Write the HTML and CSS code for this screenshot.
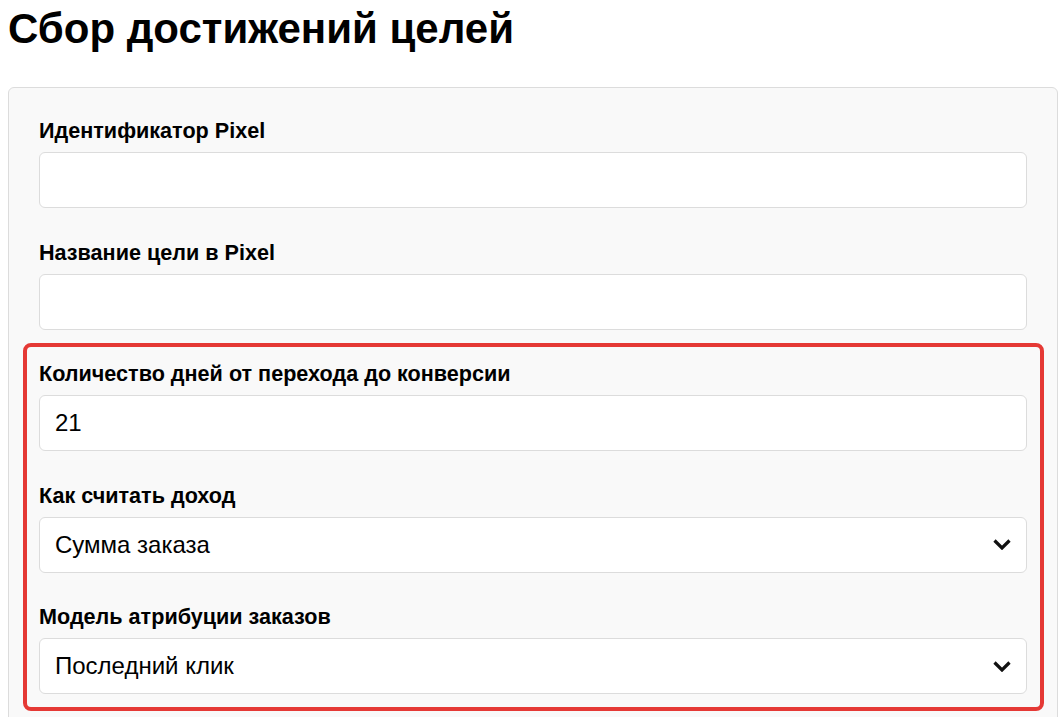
FILE: index.html
```html
<!DOCTYPE html>
<html lang="ru">
<head>
<meta charset="utf-8">
<title>Сбор достижений целей</title>
<link rel="stylesheet" href="styles.css">
</head>
<body>
<h1 class="title">Сбор достижений целей</h1>
<div class="card">
  <div class="field">
    <label class="label">Идентификатор Pixel</label>
    <input class="input" type="text" value="">
  </div>
  <div class="field">
    <label class="label">Название цели в Pixel</label>
    <input class="input" type="text" value="">
  </div>
  <div class="highlight">
    <div class="field">
      <label class="label">Количество дней от перехода до конверсии</label>
      <input class="input" type="text" value="21">
    </div>
    <div class="field">
      <label class="label">Как считать доход</label>
      <div class="select">
        <span class="select-value">Сумма заказа</span>
        <svg class="chevron" width="18" height="11" viewBox="0 0 18 11"><path d="M1.5 1.5 L9 9 L16.5 1.5" fill="none" stroke="#111" stroke-width="3.2"/></svg>
      </div>
    </div>
    <div class="field last">
      <label class="label">Модель атрибуции заказов</label>
      <div class="select">
        <span class="select-value">Последний клик</span>
        <svg class="chevron" width="18" height="11" viewBox="0 0 18 11"><path d="M1.5 1.5 L9 9 L16.5 1.5" fill="none" stroke="#111" stroke-width="3.2"/></svg>
      </div>
    </div>
  </div>
</div>
</body>
</html>
```
FILE: styles.css
```css
* { box-sizing: border-box; }
html, body { background: #fff; }
body {
  margin: 0;
  padding: 4px 8px 0 8px;
  font-family: "Liberation Sans", Arial, sans-serif;
  color: #000;
}
.title {
  margin: 0 0 33px 0;
  font-size: 42px;
  line-height: 50px;
  font-weight: 700;
}
.card {
  width: 1050px;
  background: #f9f9f9;
  border: 1px solid #dcdcdc;
  border-radius: 6px;
  padding: 30px 30px 30px 30px;
}
.field {
  display: flex;
  flex-direction: column;
  margin-bottom: 31.5px;
}
.field.last { margin-bottom: 0; }
.label {
  display: block;
  font-size: 21.6px;
  font-weight: 700;
  line-height: 26px;
  margin-bottom: 8px;
}
.input, .select {
  height: 56px;
  width: 100%;
  background: #fff;
  border: 1px solid #dcdcdc;
  border-radius: 6px;
  padding: 0 15px;
  font-family: "Liberation Sans", Arial, sans-serif;
  font-size: 24px;
  color: #000;
  outline: none;
}
.select {
  display: flex;
  align-items: center;
  justify-content: space-between;
  padding-right: 15px;
}
.chevron { display: block; }
.highlight {
  margin: -18.5px -17px 0 -16px;
  padding: 14.5px 13px 13px 12px;
  border: 4px solid #e53935;
  border-radius: 8px;
}
```
